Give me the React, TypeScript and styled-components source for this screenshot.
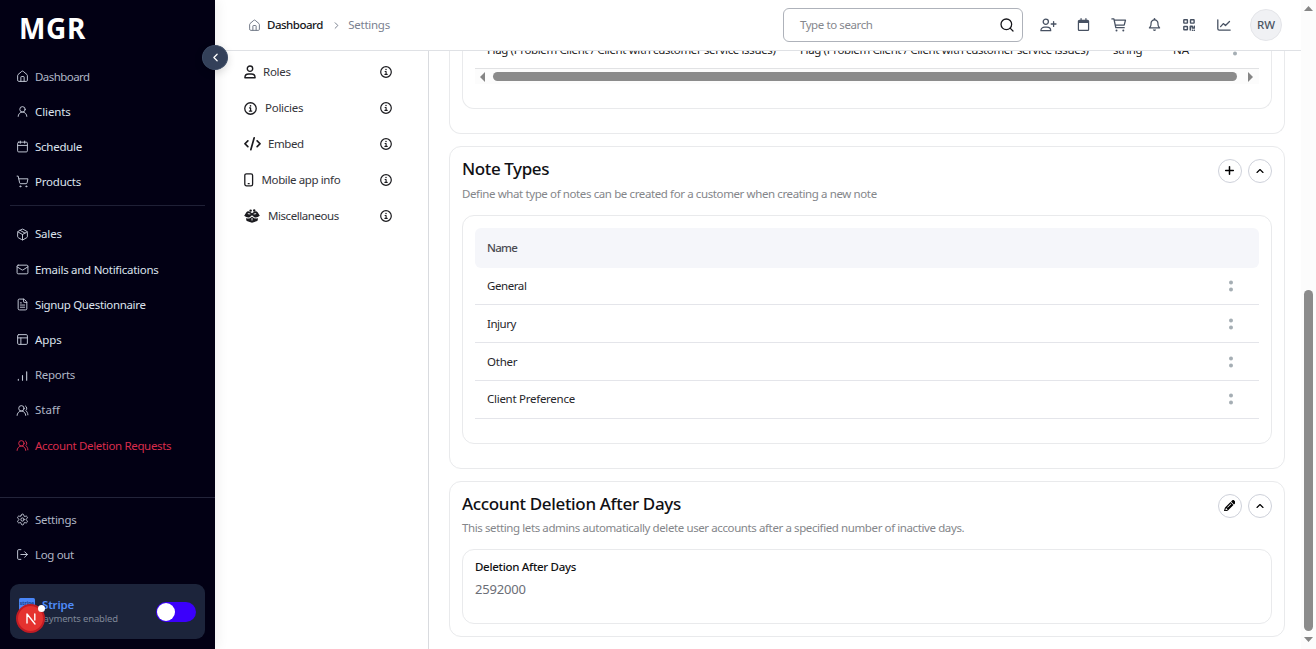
import React from "react";
import styled, { createGlobalStyle } from "styled-components";
import {
  House, UserRound, Calendar, ShoppingCart, Package, Mail, FileText, PanelsTopLeft,
  UsersRound, Settings, LogOut, ChevronLeft, ChevronRight, ChevronUp, Search, Plus,
} from "lucide-react";
import { FaRegUser, FaRegCalendar, FaRegBell, FaCode, FaPencil } from "react-icons/fa6";

const GlobalStyle = createGlobalStyle`
  * { box-sizing: border-box; }
  body { margin: 0; background: #fff; overflow: hidden; font-family: "Noto Sans", "Open Sans", sans-serif; }
`;

const Text = styled.span<{ $size?: number; $weight?: number; $ls?: number; $color?: string }>`
  font-size: ${(p) => p.$size ?? 11.5}px;
  font-weight: ${(p) => p.$weight ?? 400};
  letter-spacing: ${(p) => p.$ls ?? 0}px;
  color: ${(p) => p.$color ?? "inherit"};
  line-height: 18px;
  white-space: nowrap;
`;

const Shell = styled.div`
  display: grid;
  grid-template-columns: 215px 1086px 15px;
  width: 1316px;
  height: 649px;
  overflow: hidden;
`;

/* Sidebar */
const Sidebar = styled.aside`
  position: relative;
  z-index: 3;
  display: flex;
  flex-direction: column;
  height: 649px;
  background: #020014;
  box-shadow: 2px 0 12px rgba(0, 0, 0, 0.07);
`;
const Brand = styled.div`
  height: 59px;
  padding: 8px 0 0 19px;
  color: #fff;
  span { line-height: 40px; }
`;
const NavGroup = styled.nav<{ $pitch: number; $top?: number }>`
  display: grid;
  grid-auto-rows: ${(p) => p.$pitch}px;
  padding-top: ${(p) => p.$top ?? 0}px;
`;
const NavItem = styled.a<{ $tone: "bright" | "dim" | "danger" }>`
  display: flex;
  align-items: center;
  gap: 6px;
  padding-left: 16px;
  color: ${(p) => (p.$tone === "bright" ? "#dde3ee" : p.$tone === "dim" ? "#b0b6c6" : "#d92c4b")};
  svg { width: 13px; height: 13px; flex: none; color: ${(p) => (p.$tone === "danger" ? "#d92c4b" : "#c3c9d6")}; }
`;
const NavRule = styled.div`
  height: 1px;
  margin: 6px 10px 0;
  background: #1f2036;
`;
const SidebarFooter = styled.div`
  margin-top: auto;
  height: 152px;
  border-top: 1px solid #23243a;
`;
const Collapse = styled.button`
  position: absolute;
  right: -13px;
  top: 45px;
  width: 26px;
  height: 25px;
  display: grid;
  place-items: center;
  padding: 0;
  border: 1px solid #3d4c66;
  border-radius: 50%;
  background: #334059;
  color: #fff;
  box-shadow: 0 3px 8px rgba(0, 0, 0, 0.14);
`;
const StripeCard = styled.div`
  position: relative;
  display: flex;
  align-items: center;
  justify-content: space-between;
  width: 195px;
  height: 55px;
  margin: 12px 10px 0;
  padding: 0 9px;
  border-radius: 9px;
  background: #1c243b;
`;
const StripeInfo = styled.div`
  display: grid;
  grid-template-columns: 16px auto;
  column-gap: 7px;
  align-items: start;
`;
const StripeMark = styled.div`
  width: 16px;
  height: 16px;
  border-radius: 1.5px;
  background: #4a86f7;
  color: #1d3f88;
  font-size: 5px;
  font-weight: 700;
  line-height: 10px;
  text-align: center;
`;
const StripeText = styled.div`
  display: flex;
  flex-direction: column;
  > span { line-height: 14px; }
  > span + span { margin-left: -4px; }
`;
const Toggle = styled.div`
  width: 40px;
  height: 20px;
  padding: 1px;
  border-radius: 10px;
  background: #3b00fb;
  &::before { content: ""; display: block; width: 18px; height: 18px; border-radius: 50%; background: #fff; }
`;
const DevBadge = styled.div`
  position: absolute;
  left: 6px;
  top: 20px;
  width: 29px;
  height: 29px;
  display: grid;
  place-items: center;
  border: 2px solid #c01c24;
  border-radius: 50%;
  background: #e5322f;
  color: #fff;
  &::after { content: ""; position: absolute; right: -2px; top: -1px; width: 7px; height: 7px; border-radius: 50%; background: #fff; }
`;

/* Header */
const Main = styled.div`
  display: flex;
  flex-direction: column;
  height: 649px;
  overflow: hidden;
`;
const Header = styled.header`
  display: flex;
  align-items: center;
  flex: none;
  height: 51px;
  padding: 0 19px 0 33px;
  border-bottom: 1px solid #dfe1e5;
  background: #fff;
`;
const Crumbs = styled.div`
  display: flex;
  align-items: center;
  flex: 1;
  color: #6f7685;
`;
const Crumb = styled.div<{ $gap: number }>`
  display: flex;
  margin-left: ${(p) => p.$gap}px;
`;
const SearchBox = styled.div`
  display: flex;
  align-items: center;
  justify-content: space-between;
  width: 240px;
  height: 34px;
  padding: 0 7px 0 16px;
  border: 1px solid #aeb2ba;
  border-radius: 6px;
`;
const Actions = styled.div`
  display: grid;
  grid-template-columns: repeat(6, 35.2px);
  justify-items: center;
  align-items: center;
  margin-left: 8px;
  padding-bottom: 1px;
  color: #475162;
`;
const Avatar = styled.div`
  display: grid;
  place-items: center;
  width: 32px;
  height: 32px;
  margin-left: 8px;
  border: 1px solid #e4e5e9;
  border-radius: 50%;
  background: #f0f1f4;
`;

/* Page body */
const Body = styled.div`
  display: flex;
  flex: 1;
  min-height: 0;
`;
const SettingsNav = styled.div`
  display: grid;
  grid-auto-rows: 36px;
  flex: none;
  width: 214px;
  padding-top: 3px;
  border-right: 1px solid #d9dbdf;
`;
const SettingsItem = styled.div`
  display: flex;
  align-items: center;
  justify-content: space-between;
  padding: 0 36px 0 29px;
  color: #1b1b1f;
`;
const SettingsLabel = styled.div<{ $gap: number }>`
  display: flex;
  align-items: center;
  gap: ${(p) => p.$gap}px;
`;
const CodeIcon = styled(FaCode)`
  width: 17px;
  height: 13.5px;
`;
const Content = styled.div`
  display: flex;
  flex-direction: column;
  width: 856px;
  padding-left: 20px;
`;
const Card = styled.section<{ $h: number; $gap: number; $cut?: boolean }>`
  display: flex;
  flex-direction: column;
  flex: none;
  height: ${(p) => p.$h}px;
  margin-bottom: ${(p) => p.$gap}px;
  padding: ${(p) => (p.$cut ? "0" : "9px")} 12px 0;
  border: 1px solid #e9eaec;
  border-radius: ${(p) => (p.$cut ? "0 0 12px 12px" : "12px")};
  border-top-width: ${(p) => (p.$cut ? 0 : 1)}px;
`;
const CardHead = styled.div<{ $h: number }>`
  display: flex;
  justify-content: space-between;
  height: ${(p) => p.$h}px;
`;
const Titles = styled.div<{ $gap: number }>`
  display: flex;
  flex-direction: column;
  > span:first-child { line-height: 26px; }
  > span + span { margin-top: ${(p) => p.$gap}px; }
`;
const Buttons = styled.div`
  display: flex;
  gap: 6px;
  padding-top: 3px;
`;
const RoundButton = styled.button`
  display: grid;
  place-items: center;
  width: 24px;
  height: 24px;
  padding: 0 1px 1px 0;
  border: 1px solid #ced1da;
  border-radius: 50%;
  background: #fff;
  color: #000;
`;
const Inner = styled.div<{ $h: number; $cut?: boolean }>`
  height: ${(p) => p.$h}px;
  padding: ${(p) => (p.$cut ? "0" : "12px")} 12px 0;
  border: 1px solid #e9eaec;
  border-top-width: ${(p) => (p.$cut ? 0 : 1)}px;
  border-radius: ${(p) => (p.$cut ? "0 0 12px 12px" : "12px")};
`;
const CutRow = styled.div`
  display: grid;
  grid-template-columns: 313px 313px 60px 59px auto;
  height: 18px;
  padding-left: 12px;
  overflow: hidden;
  border-bottom: 1px solid #e1e2e4;
  color: #222;
  > span { margin-top: -10px; }
  > svg { margin: -7px 0 0 0; }
`;
const HScroll = styled.div`
  display: flex;
  align-items: center;
  height: 15px;
  padding: 0 5px;
  background: #fcfcfc;
`;
const HThumb = styled.div`
  width: 744px;
  height: 9px;
  margin: 0 11px 0 8px;
  border-radius: 5px;
  background: #8b8b8b;
`;
const TableHead = styled.div`
  display: flex;
  align-items: center;
  height: 40px;
  padding-left: 12px;
  border-radius: 6px;
  background: #f5f6fa;
`;
const TableRow = styled.div<{ $h: number }>`
  display: flex;
  align-items: center;
  justify-content: space-between;
  height: ${(p) => p.$h}px;
  padding: 0 25px 0 12px;
  border-bottom: 1px solid #e4e5ea;
  color: #26262a;
  &:last-child { padding-bottom: 2px; }
`;
const Field = styled.div`
  display: flex;
  flex-direction: column;
  gap: 4px;
  margin-top: -4px;
`;
const VScroll = styled.div`
  display: flex;
  flex-direction: column;
  align-items: center;
  height: 649px;
  padding: 6px 0 7px;
  background: #fcfcfc;
`;
const VThumb = styled.div`
  width: 9px;
  height: 341px;
  margin: auto 0 6px;
  border-radius: 5px;
  background: #8b8b8b;
`;

const stroke = { fill: "none", stroke: "currentColor", strokeLinecap: "round" as const, strokeLinejoin: "round" as const };

const Bars = () => (
  <svg viewBox="0 0 14 14" {...stroke} strokeWidth="1.2"><path d="M2.500 12v-.8M7 12V7M11.500 12V3" /></svg>
);
const Info = ({ size = 12 }: { size?: number }) => (
  <svg width={size} height={size} viewBox="0 0 12 12" {...stroke} strokeWidth="1.2">
    <circle cx="6" cy="6" r="5.3" />
    <path d="M5.1 5.5h1v2.7M4.9 8.4h2.3" strokeWidth="1.1" />
    <circle cx="6" cy="3.6" r=".75" fill="currentColor" stroke="none" />
  </svg>
);
const PersonIcon = () => (
  <svg width="13" height="14" viewBox="0 0 13 14" {...stroke} strokeWidth="1.4">
    <circle cx="6" cy="3.700" r="2.700" />
    <path d="M.9 12.700c0-2.200 1.600-3.700 3.700-3.700h2.800c2.100 0 3.700 1.500 3.700 3.700z" />
  </svg>
);
const UserPlus = () => (
  <svg width="17" height="14" viewBox="0 0 17 14" {...stroke} strokeWidth="1.3">
    <circle cx="5.800" cy="3.700" r="2.600" />
    <path d="M.9 12.700c0-2 1.600-3.500 3.800-3.500h2.200c2.200 0 3.800 1.500 3.800 3.500zM13.600 3.600v4.800M11.200 6H16" />
  </svg>
);
const Cart = () => (
  <svg width="16" height="14" viewBox="0 0 16 14" {...stroke} strokeWidth="1.3">
    <path d="M.9.9h2l1.900 8.800h8.400M3.300 2.200h11.200l-1.300 5H4.400" />
    <circle cx="5.500" cy="12.400" r="1" fill="currentColor" stroke="none" />
    <circle cx="12.300" cy="12.400" r="1" fill="currentColor" stroke="none" />
  </svg>
);
const QrCode = () => (
  <svg width="12" height="12" viewBox="0 0 12 12" {...stroke} strokeWidth="1.4">
    <rect x=".8" y=".8" width="3.6" height="3.3" rx=".4" />
    <rect x="7.5" y=".8" width="3.6" height="3.3" rx=".4" />
    <rect x=".8" y="7.5" width="3.6" height="3.3" rx=".4" />
    <path d="M7.3 7.3v3.8M7.3 7.3h2v1.800h2V7.2M9.4 11.2h.2M11.3 11.2h.1" strokeWidth="1.5" />
  </svg>
);
const Chart = () => (
  <svg width="14" height="12" viewBox="0 0 14 12" {...stroke} strokeWidth="1.3">
    <path d="M.8.8v8.900c0 .9.5 1.400 1.400 1.400h11M3.600 7.600l2.700-3 2.200 1.900 4-4" />
  </svg>
);
const Mobile = () => (
  <svg width="10" height="14" viewBox="0 0 10 14" {...stroke} strokeWidth="1.3">
    <rect x=".8" y=".8" width="7.800" height="12" rx="1.600" />
    <path d="M4.200 10.700h1" strokeWidth="1.200" />
  </svg>
);
const OpenBox = () => (
  <svg width="16" height="14" viewBox="0 0 16 14">
    <g fill="currentColor">
      <path d="M2.200 3.600Q3.600 1.400 6 2.800L8 4.300l2-1.500q2.400-1.400 3.800.8L15.800 6.800q-2.800 2.500-5.500 1.500L8 6.300 5.700 8.300Q3 9.300.2 6.800z" />
      <path d="M2.200 9q2 1 4 0L8 7.700 9.800 9q2 1 4 0v1.800q0 1-1.300 1.500L8 13.700l-4.500-1.400q-1.300-.5-1.300-1.500z" />
      <circle cx="6.600" cy="1.600" r="1.200" /><circle cx="10.200" cy="1.500" r="1.200" />
    </g>
    <path d="M3.800 4.600 6.300 5M12.200 4.600 9.700 5M8 9v2.500" stroke="#fff" strokeWidth=".9" />
  </svg>
);
const Dots = () => (
  <svg width="6" height="12" viewBox="0 0 6 12" fill="#a5aeb4">
    <circle cx="3" cy="2.5" r="2" /><circle cx="3" cy="9.5" r="2" />
  </svg>
);
const RowDots = () => (
  <svg width="6" height="12" viewBox="0 0 6 12" fill="#a5aeb4">
    <circle cx="3" cy="9.5" r="2" />
  </svg>
);
const Arrow = ({ d, w, h }: { d: string; w: number; h: number }) => (
  <svg width={w} height={h} viewBox={`0 0 ${w} ${h}`} fill="#858585"><path d={d} /></svg>
);

type Nav = [React.ReactNode, string, number, "bright" | "dim" | "danger"];
const primary: Nav[] = [
  [<House strokeWidth={1.8} />, "Dashboard", -0.56, "dim"],
  [<UserRound strokeWidth={1.8} />, "Clients", -0.1, "bright"],
  [<Calendar strokeWidth={1.8} />, "Schedule", -0.26, "bright"],
  [<ShoppingCart strokeWidth={1.8} />, "Products", -0.22, "bright"],
];
const secondary: Nav[] = [
  [<Package strokeWidth={1.8} />, "Sales", -0.2, "bright"],
  [<Mail strokeWidth={1.8} />, "Emails and Notifications", -0.275, "bright"],
  [<FileText strokeWidth={1.8} />, "Signup Questionnaire", -0.345, "bright"],
  [<PanelsTopLeft strokeWidth={1.8} />, "Apps", -0.1, "bright"],
  [<Bars />, "Reports", -0.3, "dim"],
  [<UsersRound strokeWidth={1.8} />, "Staff", 0, "dim"],
  [<UsersRound strokeWidth={1.8} />, "Account Deletion Requests", -0.34, "danger"],
];
const footer: Nav[] = [
  [<Settings strokeWidth={1.8} />, "Settings", -0.3, "dim"],
  [<LogOut strokeWidth={1.8} />, "Log out", -0.35, "dim"],
];
const sections: [React.ReactNode, string, number, number][] = [
  [<PersonIcon />, "Roles", -0.25, 6],
  [<Info size={13} />, "Policies", -0.26, 8],
  [<CodeIcon />, "Embed", -0.4, 7],
  [<Mobile />, "Mobile app info", -0.38, 7.5],
  [<OpenBox />, "Miscellaneous", -0.43, 8],
];
const notes: [string, number, number][] = [
  ["General", -0.42, 37], ["Injury", -0.48, 38], ["Other", -0.25, 38], ["Client Preference", -0.27, 38],
];

const NavList = ({ items, pitch, top }: { items: Nav[]; pitch: number; top?: number }) => (
  <NavGroup $pitch={pitch} $top={top}>
    {items.map(([icon, label, ls, tone]) => (
      <NavItem key={label} $tone={tone}>{icon}<Text $ls={ls}>{label}</Text></NavItem>
    ))}
  </NavGroup>
);

export default function App() {
  return (
    <Shell>
      <GlobalStyle />
      <Sidebar>
        <Brand><Text $size={28} $weight={700} $ls={0.7}>MGR</Text></Brand>
        <NavList items={primary} pitch={35} />
        <NavRule />
        <NavList items={secondary} pitch={35.2} top={10.8} />
        <SidebarFooter>
          <NavList items={footer} pitch={35} top={4} />
          <StripeCard>
            <StripeInfo>
              <StripeMark>stripe</StripeMark>
              <StripeText>
                <Text $weight={600} $ls={-0.195} $color="#4f8bf9">Stripe</Text>
                <Text $size={9.5} $ls={-0.16} $color="#7f8798">Payments enabled</Text>
              </StripeText>
            </StripeInfo>
            <Toggle />
            <DevBadge>
              <svg width="12" height="13" viewBox="0 0 12 13" {...stroke} strokeWidth="1.4"><path d="M2 11V2l8 10M9.800 2v6" /></svg>
            </DevBadge>
          </StripeCard>
        </SidebarFooter>
        <Collapse><ChevronLeft size={13} strokeWidth={2.3} /></Collapse>
      </Sidebar>
      <Main>
        <Header>
          <Crumbs>
            <House size={13} strokeWidth={1.8} />
            <Crumb $gap={6}><Text $weight={500} $ls={-0.5} $color="#16161c">Dashboard</Text></Crumb>
            <Crumb $gap={8}><ChevronRight size={11} /></Crumb>
            <Crumb $gap={6.5}><Text $ls={-0.27} $color="#7a8190">Settings</Text></Crumb>
          </Crumbs>
          <SearchBox>
            <Text $ls={-0.4} $color="#85878d">Type to search</Text>
            <Search size={16} strokeWidth={1.9} color="#15151a" />
          </SearchBox>
          <Actions>
            <UserPlus /><FaRegCalendar size={13} /><Cart /><FaRegBell size={13} /><QrCode /><Chart />
          </Actions>
          <Avatar><Text $weight={500} $ls={-0.05} $color="#4b5563">RW</Text></Avatar>
        </Header>
        <Body>
          <SettingsNav>
            {sections.map(([icon, label, ls, gap]) => (
              <SettingsItem key={label}>
                <SettingsLabel $gap={gap}>{icon}<Text $ls={ls} $color="#33343a">{label}</Text></SettingsLabel>
                <Info />
              </SettingsItem>
            ))}
          </SettingsNav>
          <Content>
            <Card $h={83} $gap={12} $cut>
              <Inner $h={58} $cut>
                <CutRow>
                  <Text $ls={-0.37}>Flag (Problem Client / Client with customer service issues)</Text>
                  <Text $ls={-0.37}>Flag (Problem Client / Client with customer service issues)</Text>
                  <Text $ls={-0.4}>string</Text>
                  <Text $ls={-0.1}>NA</Text>
                  <RowDots />
                </CutRow>
                <HScroll>
                  <Arrow w={5} h={10} d="M5 0v10L0 5z" />
                  <HThumb />
                  <Arrow w={5} h={10} d="M0 0v10l5-5z" />
                </HScroll>
              </Inner>
            </Card>
            <Card $h={323} $gap={12}>
              <CardHead $h={59}>
                <Titles $gap={3}>
                  <Text $size={17} $weight={500} $ls={-0.4} $color="#101014">Note Types</Text>
                  <Text $ls={-0.39} $color="#84868a">Define what type of notes can be created for a customer when creating a new note</Text>
                </Titles>
                <Buttons>
                  <RoundButton><Plus size={13} strokeWidth={2.8} /></RoundButton>
                  <RoundButton><ChevronUp size={12} strokeWidth={2.3} /></RoundButton>
                </Buttons>
              </CardHead>
              <Inner $h={229}>
                <TableHead><Text $weight={500} $ls={-0.7} $color="#4a4b52">Name</Text></TableHead>
                {notes.map(([label, ls, h]) => (
                  <TableRow key={label} $h={h}><Text $ls={ls}>{label}</Text><Dots /></TableRow>
                ))}
              </Inner>
            </Card>
            <Card $h={156} $gap={0}>
              <CardHead $h={58}>
                <Titles $gap={2}>
                  <Text $size={17} $weight={500} $ls={-0.34} $color="#101014">Account Deletion After Days</Text>
                  <Text $ls={-0.398} $color="#84868a">This setting lets admins automatically delete user accounts after a specified number of inactive days.</Text>
                </Titles>
                <Buttons>
                  <RoundButton><FaPencil size={11.5} /></RoundButton>
                  <RoundButton><ChevronUp size={12} strokeWidth={2.3} /></RoundButton>
                </Buttons>
              </CardHead>
              <Inner $h={75}>
                <Field>
                  <Text $weight={500} $ls={-0.29} $color="#111114">Deletion After Days</Text>
                  <Text $size={13} $ls={-0.2} $color="#6b6e76">2592000</Text>
                </Field>
              </Inner>
            </Card>
          </Content>
        </Body>
      </Main>
      <VScroll>
        <Arrow w={9} h={5} d="M0 5h9L4.500 0z" />
        <VThumb />
        <Arrow w={9} h={5} d="M0 0h9L4.500 5z" />
      </VScroll>
    </Shell>
  );
}
